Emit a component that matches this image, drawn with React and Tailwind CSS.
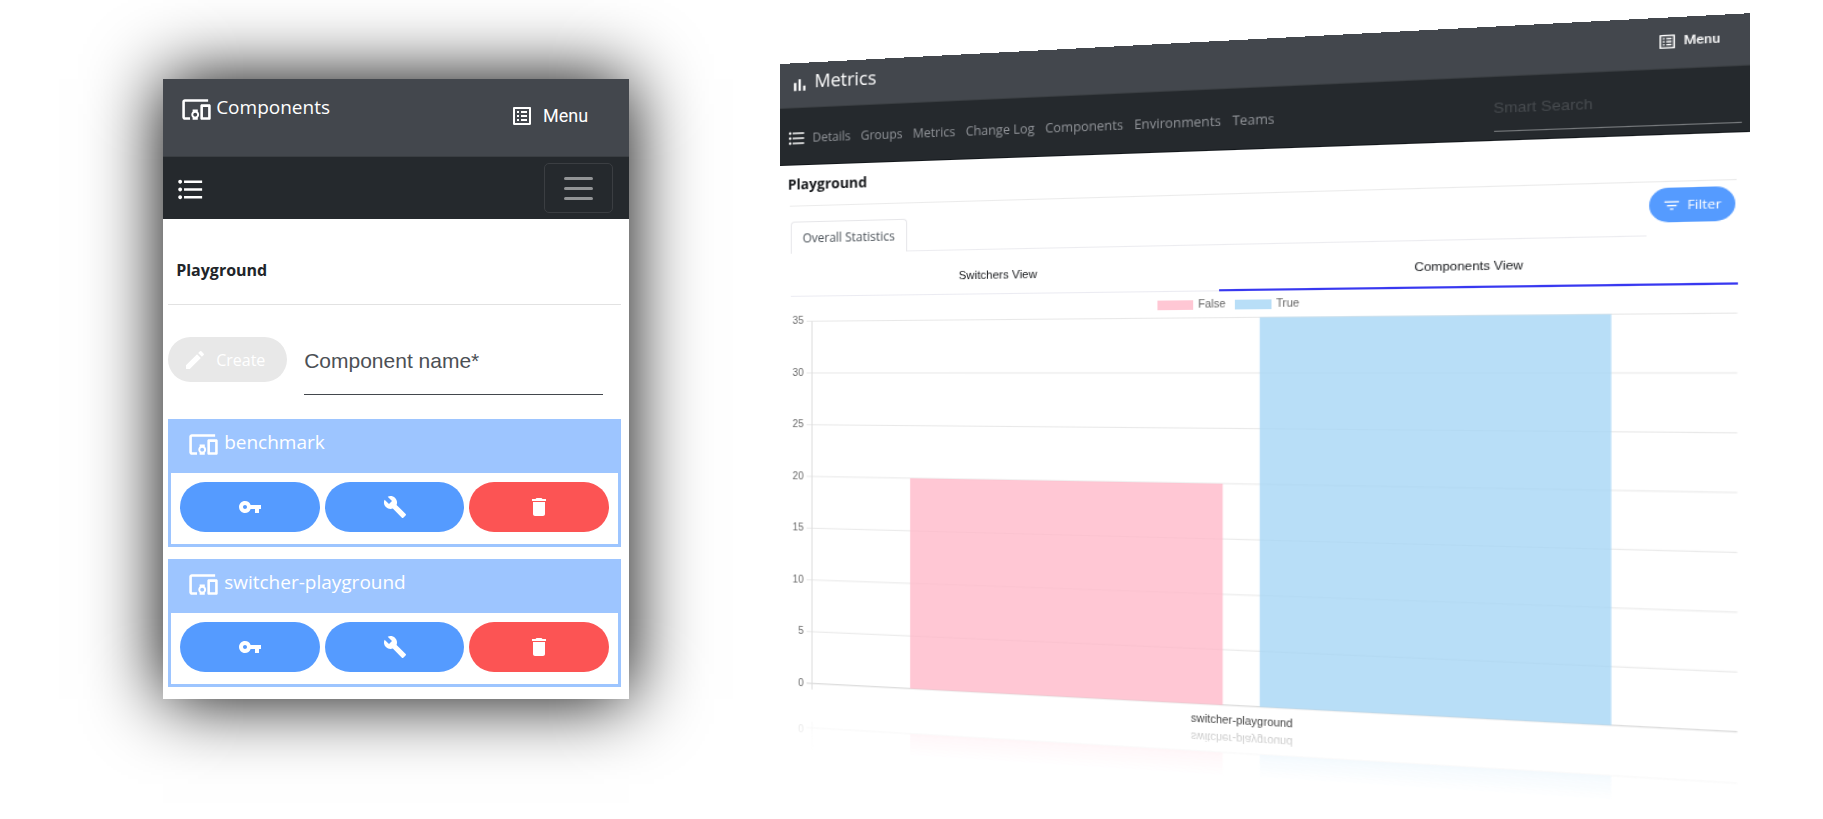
import { MdDevicesOther, MdFormatListBulleted, MdListAlt, MdEdit, MdVpnKey, MdBuild, MdDelete, MdFilterList } from "react-icons/md";

const links = ["Details", "Groups", "Metrics", "Change Log", "Components", "Environments", "Teams"];
const ticks = [35, 30, 25, 20, 15, 10, 5, 0];
const tickY = (value) => 7.5 + (35 - value) * 10.3;

function ComponentCard({ name }) {
  return (
    <article className="border-[3px] border-[#9dc5ff] bg-white">
      <h3 className="flex h-[51px] items-center gap-[5px] bg-[#9dc5ff] pb-2 pl-[17px] text-[19px] text-white">
        <MdDevicesOther className="mt-[2px] size-[31px]" />
        <span className="pb-[2px]">{name}</span>
      </h3>
      <div className="grid grid-cols-3 gap-[5px] px-[9px] pt-[9px] pb-3">
        <button aria-label={`Key of ${name}`} className="flex h-[50px] items-center justify-center rounded-full bg-[#559bff] text-white">
          <MdVpnKey className="size-6" />
        </button>
        <button aria-label={`Edit ${name}`} className="flex h-[50px] items-center justify-center rounded-full bg-[#559bff] text-white">
          <MdBuild className="size-6" />
        </button>
        <button aria-label={`Delete ${name}`} className="flex h-[50px] items-center justify-center rounded-full bg-[#fc5454] text-white">
          <MdDelete className="size-6" />
        </button>
      </div>
    </article>
  );
}

function Phone() {
  return (
    <section className="mt-[79px] ml-[8.95%] w-[25.56%] shrink-0 bg-white pb-3 shadow-[0_0_70px_#000000]">
      <header className="flex h-[78px] justify-between border-b border-[#3a3e42] bg-[#43474d] pr-[41px] pl-[18px] text-white">
        <h1 className="flex h-[60px] items-center gap-1 text-[19px]">
          <MdDevicesOther className="size-[31px]" />
          <span className="pb-1">Components</span>
        </h1>
        <button className="flex items-center gap-[9px] pb-1 font-['Roboto',sans-serif] text-[18px]">
          <MdListAlt className="size-6" />
          Menu
        </button>
      </header>
      <nav className="flex h-[62px] items-center justify-between bg-[#25292d] pr-4 pl-3">
        <MdFormatListBulleted className="mt-[2px] size-[31px] text-white" />
        <button aria-label="Toggle navigation" className="flex h-[50px] w-[69px] flex-col items-center justify-center gap-[7px] rounded-[5px] border border-[#3b3e42]">
          <span className="h-[3px] w-[29px] rounded-full bg-[#929496]" />
          <span className="h-[3px] w-[29px] rounded-full bg-[#929496]" />
          <span className="h-[3px] w-[29px] rounded-full bg-[#929496]" />
        </button>
      </nav>
      <div className="pr-2 pl-[5px]">
        <h2 className="flex h-[86px] items-center border-b border-[#e2e2e2] pt-4 pl-2 text-[16px] font-bold text-[#212529]">Playground</h2>
        <form className="flex items-start pt-8 pr-[18px] pb-6">
          <button type="button" className="flex h-[45px] w-[119px] items-center gap-[9px] rounded-full bg-[#e8e8e8] pl-[15px] text-[16px] text-white">
            <MdEdit className="size-6" />
            Create
          </button>
          <input aria-label="Component name" placeholder="Component name*" className="ml-[17px] h-[58px] min-w-0 flex-1 border-b border-[#43474d] pb-[10px] font-['Liberation_Sans',sans-serif] text-[21px] outline-none placeholder:text-[#4c5055] placeholder:opacity-100" />
        </form>
        <div className="flex flex-col gap-3">
          <ComponentCard name="benchmark" />
          <ComponentCard name="switcher-playground" />
        </div>
      </div>
    </section>
  );
}

function ChartDrawing({ values }) {
  return (
    <>
      {values.map((t) => (
        <g key={t}>
          <text x="24" y={tickY(t) + 3} textAnchor="end" fontSize="10" fill="#666">{t}</text>
          <path d={`M27 ${tickY(t)}H841`} stroke={t === 0 ? "#d2d2d2" : "#e8e8e8"} />
        </g>
      ))}
      <path d="M32.500 7.500V374" stroke="#dcdcdc" />
      <path d="M130 162H420.500V368H130z" fill="#ffb9c9" fillOpacity=".8" />
      <path d="M453 7.500H744V368H453z" fill="#a6d6f5" fillOpacity=".8" />
      <text x="437" y="385" textAnchor="middle" fontSize="10" fill="#444">switcher-playground</text>
    </>
  );
}

function Reflection() {
  return (
    <svg viewBox="0 0 850 60" className="absolute top-full left-0 w-full font-['Liberation_Sans',sans-serif] [mask-image:linear-gradient(rgb(0_0_0/.35),rgb(0_0_0/.2)_25%,transparent_75%)]" aria-hidden="true">
      <g transform="translate(0 390) scale(1 -1)">
        <ChartDrawing values={[0]} />
      </g>
    </svg>
  );
}

function Dashboard() {
  return (
    <div className="relative bg-white">
      <header className="flex h-[45px] items-center justify-between border-b border-[#3a3e42] bg-[#43474d] pr-[22px] pl-[10px] text-white">
        <h1 className="flex items-center gap-[5px] pb-2 text-[18px]">
          <svg viewBox="0 0 24 24" className="mt-2 size-5" fill="currentColor" aria-hidden="true">
            <path d="M5 9.200h3V19H5zM10.600 5h2.800v14h-2.800zm5.600 8H19v6h-2.800z" />
          </svg>
          Metrics
        </h1>
        <button className="flex items-center gap-[5px] pb-[2px] font-['Roboto',sans-serif] text-[11px] font-medium">
          <MdListAlt className="size-4" />
          Menu
        </button>
      </header>
      <nav className="flex h-[57px] items-center border-b border-[#12161a] bg-[#25292d] pr-[6px] pl-[7px]">
        <MdFormatListBulleted className="mt-1 mr-[6px] size-5 text-white" />
        <div className="flex gap-[10px] pt-1 text-[12px] text-[#92959a]">
          {links.map((l) => (
            <a key={l} href="#">{l}</a>
          ))}
        </div>
        <input aria-label="Smart Search" placeholder="Smart Search" className="ml-auto h-[41px] w-[194px] border-b border-[#777a7d] font-['Liberation_Sans',sans-serif] text-[13px] outline-none placeholder:text-[#484c50] placeholder:opacity-100" />
      </nav>
      <h2 className="flex h-10 items-center pb-1 pl-2 text-[14px] font-bold text-[#17191c]">Playground</h2>
      <hr className="mx-[10px] border-[#ebebeb]" />
      <div className="mr-[9px] ml-[11px] mt-[5px] flex h-[42px] items-end">
        <button className="h-8 w-[116px] rounded-t-[4px] border border-b-0 border-[#e6e6e9] text-[12px] text-[#495057]">Overall Statistics</button>
        <span className="mr-[2px] flex-1 border-b border-[#ececf0]" />
        <button className="mr-[2px] flex h-[30px] w-[66px] items-center justify-center gap-[5px] self-start rounded-full bg-[#559bff] text-[11px] text-white">
          <MdFilterList className="size-[15px]" />
          Filter
        </button>
      </div>
      <div className="mr-[9px] ml-[11px] grid h-[43px] grid-cols-[49fr_51fr] font-['Liberation_Sans',sans-serif] text-[11px] text-[#17191c]">
        <button className="border-b border-[#ebebf2] pt-[6px]">Switchers View</button>
        <button className="border-b-2 border-[#3838f0] pt-[6px]">Components View</button>
      </div>
      <div className="flex h-[17px] items-center justify-center gap-2 pt-[7px] font-['Liberation_Sans',sans-serif] text-[10px] leading-[10px] text-[#666666]">
        <span className="flex items-center gap-1">
          <span className="h-[9px] w-8 bg-[#ffc7d4]" />
          False
        </span>
        <span className="flex items-center gap-1">
          <span className="h-[9px] w-8 bg-[#b8def7]" />
          True
        </span>
      </div>
      <svg viewBox="0 0 850 390" className="block w-full font-['Liberation_Sans',sans-serif]" role="img" aria-label="Components View">
        <ChartDrawing values={ticks} />
      </svg>
      <Reflection />
    </div>
  );
}

export default function App() {
  return (
    <main className="flex min-h-screen items-start overflow-hidden bg-white font-['Open_Sans','Noto_Sans',sans-serif]">
      <Phone />
      <section className="mt-16 ml-[8.28%] w-[46.6%] shrink-0 origin-[0_309px] [transform:perspective(1200px)_rotateY(-11.5deg)]">
        <Dashboard />
      </section>
    </main>
  );
}
